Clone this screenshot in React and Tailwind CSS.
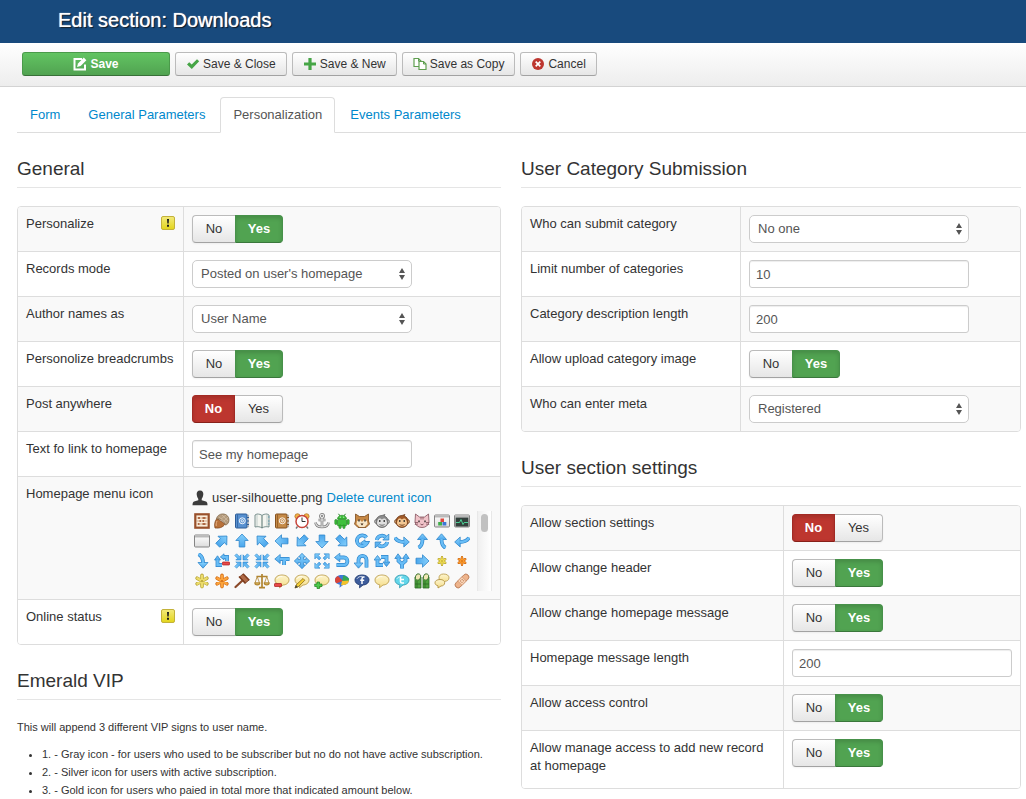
import React, { useState } from "react";

// ── Toolbar icons ─────────────────────────────────────────────
const toolbarIcons = {
  edit: (
    <>
      <path d="M9 2H1.500v10.500H12V7.500" fill="none" stroke="#fff" strokeWidth="2" />
      <path d="M4 10l1-3.600L10.800.6l2.600 2.600L7.600 9z" fill="#fff" />
    </>
  ),
  check: <path d="M1 7.400l2.200-2.200 2.500 2.300L11 2.200 13.200 4.300 5.800 11.900z" fill="#46a546" />,
  plus: <path d="M5.400 1h3.200v4.400H13v3.200H8.600V13H5.400V8.600H1V5.400h4.400z" fill="#46a546" />,
  copy: (
    <>
      <path d="M1 1.500h4.500l2.500 2.500v5.500H1z" fill="#fff" stroke="#5f9f50" strokeWidth="1.200" />
      <path d="M5.500 1.500V4H8" fill="none" stroke="#5f9f50" />
      <path d="M6 4.500h4.500L13 7v5.500H6z" fill="#fff" stroke="#5f9f50" strokeWidth="1.200" />
      <path d="M10.500 4.500V7H13" fill="none" stroke="#5f9f50" />
    </>
  ),
  cancel: (
    <>
      <circle cx="7" cy="7" r="6" fill="#bd362f" />
      <path d="M4.700 4.700l4.600 4.600M9.300 4.700L4.700 9.300" stroke="#fff" strokeWidth="1.700" />
    </>
  ),
};

function ToolbarIcon({ name }) {
  return (
    <svg viewBox="0 0 14 14" className="h-3.5 w-3.5 shrink-0" aria-hidden="true">
      {toolbarIcons[name]}
    </svg>
  );
}

// ── Small 16px icons for the homepage menu picker ─────────────
const blue = { fill: "url(#arrowFill)", stroke: "#2f86cc", strokeWidth: 0.8, strokeLinejoin: "round" };

function Arrow({ angle = 0 }) {
  return <path {...blue} transform={`rotate(${angle} 8 8)`} d="M8 1l6.200 6.500h-3.400V14H5.200V7.500H1.800z" />;
}

// thick bent line with a darker outline, plus its arrow heads
function Bend({ line, head }) {
  return (
    <>
      <path d={line} fill="none" stroke="#2f86cc" strokeWidth="3.800" />
      <path d={head} {...blue} />
      <path d={line} fill="none" stroke="#68bdf6" strokeWidth="2.400" />
    </>
  );
}

function Corners({ inward }) {
  return [0, 90, 180, 270].map((angle) => (
    <path
      key={angle}
      {...blue}
      strokeWidth={0.6}
      transform={`rotate(${angle} 8 8)`}
      d={inward ? "M7 7H1.800l1.700-1.700L.8 2.600 2.600.8l2.700 2.700L7 1.800z" : "M.8.8H6L4.300 2.500l2.600 2.600-1.800 1.800L2.500 4.300.8 6z"}
    />
  ));
}

function Asterisk({ color, dark, small }) {
  return (
    <g transform={small ? "translate(3.200 3.200) scale(.6)" : "translate(.8 .8) scale(.9)"}>
      <path d="M8 1.800v12.400M2.600 4.900l10.800 6.200M13.400 4.900L2.600 11.100" stroke={dark} strokeWidth="4" strokeLinecap="round" />
      <path d="M8 2v12M2.800 5l10.400 6M13.200 5L2.800 11" stroke={color} strokeWidth="2.600" strokeLinecap="round" />
      <circle cx="8" cy="8" r="1.200" fill={dark} />
    </g>
  );
}

function Balloon({ fill = "url(#balloonFill)", stroke = "#bda052", children }) {
  return (
    <>
      <path d="M8 2c4 0 7 2 7 5s-3 5-6 5l-3.500 2.800.3-3C3 11.300 1 9.700 1 7c0-3 3-5 7-5z" fill={fill} stroke={stroke} strokeWidth=".9" />
      <path d="M3 5.800C4 4 6 3.300 8.500 3.300" stroke="#fff" fill="none" opacity=".7" />
      {children}
    </>
  );
}

function AddressBook({ cover, dark }) {
  return (
    <>
      <path d="M12.500 2h2v12h-2z" fill="#eee" stroke="#999" strokeWidth=".6" />
      <path d="M13 4.500h2M13 8h2M13 11.500h2" stroke={dark} />
      <rect x="1.500" y="1" width="11.500" height="14" rx="1" fill={cover} stroke={dark} />
      <path d="M3.500 1.500v13" stroke={dark} strokeWidth=".7" />
      <circle cx="8.300" cy="7.800" r="3" fill="none" stroke="#fff" strokeWidth=".9" />
      <circle cx="8.300" cy="7.800" r="1.200" fill="none" stroke="#fff" strokeWidth=".9" />
    </>
  );
}

function Monkey({ fur, face, dark }) {
  return (
    <>
      <circle cx="2.500" cy="8.500" r="2" fill={face} stroke={dark} strokeWidth=".7" />
      <circle cx="13.500" cy="8.500" r="2" fill={face} stroke={dark} strokeWidth=".7" />
      <path d="M8 2.500l3-1-1 1.500c3 .8 4 3 4 5.500 0 3.500-2.500 6-6 6s-6-2.500-6-6C2 5 4.500 2.500 8 2.500z" fill={fur} stroke={dark} strokeWidth=".7" />
      <path d="M3.800 7c1-2.200 3.200-1.700 4.200-.4 1-1.300 3.200-1.800 4.200.4 1 1.800.8 3 .6 4-1 3.300-8.600 3.300-9.600 0-.2-1-.4-2.200.6-4z" fill={face} />
      <path d="M5.800 7v2M10.200 7v2" stroke="#222" strokeWidth="1.200" />
      <path d="M5.500 11.500c1.500 1 3.500 1 5 0" fill="none" stroke={dark} strokeWidth=".9" />
    </>
  );
}

function AppWindow({ children }) {
  return (
    <>
      <rect x=".5" y="2" width="15" height="12" rx="1" fill="url(#windowFill)" stroke="#858585" />
      <path d="M1 3.500h14" stroke="#b9b9b9" strokeWidth="2" />
      {children}
    </>
  );
}

const pickerIcons = [
  // row 1
  ["abacus", <>
    <rect x="1.300" y="1.300" width="13.400" height="13.400" fill="#fbeedd" stroke="#99502b" strokeWidth="2.200" />
    <path d="M2.500 5h11M2.500 8h11M2.500 11h11" stroke="#c08a64" strokeWidth=".7" />
    <path d="M4 5h2M8.500 5h3M5.500 8h1.500M8.500 8h1.500M4 11h1.500M8.500 11h3" stroke="#9c4a22" strokeWidth="1.700" />
  </>],
  ["acorn", <>
    <path d="M3 5.500C0 9 .5 13 1 15c4 .5 8-.5 10-4z" fill="#b8713a" stroke="#7a4118" strokeWidth=".7" />
    <path d="M3 8c-1 2-1 4-.7 5" stroke="#e5b184" fill="none" />
    <path d="M2.500 6C3 2 7 .5 10 1c3 .5 5 3 5 6 0 3-2 5-4 5-1-4-5-6.500-8.500-6z" fill="#b59c7e" stroke="#7d6446" strokeWidth=".7" />
    <path d="M5 4l7 6M8 2l6 6M7 6l5-4M10 8l4-4" stroke="#d6c3aa" strokeWidth=".6" />
  </>],
  ["address-book-blue", <AddressBook cover="#5790d0" dark="#2d5c98" />],
  ["address-book-open", <>
    <path d="M1 2l2-1c2 0 4 .5 5 1.500C9 1.500 11 1 13 1l2 1v12c-3-.7-5-.3-7 1-2-1.300-4-1.700-7-1z" fill="#f4f5f0" stroke="#6b8582" strokeWidth=".9" />
    <path d="M8 2.500V15" stroke="#54706c" />
    <path d="M3 1.500V13M13 1.500V13" stroke="#b4c3c1" strokeWidth=".8" />
    <path d="M14 4h1.500M14 8h1.500M14 11h1.500" stroke="#5a95a8" />
  </>],
  ["address-book-brown", <AddressBook cover="#c58a47" dark="#85511f" />],
  ["alarm-clock", <>
    <path d="M3.500 13.500L2 15.500M12.500 13.500l1.500 2" stroke="#777" strokeWidth="1.400" />
    <circle cx="3.500" cy="3.300" r="2.600" fill="#f0b348" stroke="#b06b1d" strokeWidth=".7" />
    <circle cx="12.500" cy="3.300" r="2.600" fill="#f0b348" stroke="#b06b1d" strokeWidth=".7" />
    <circle cx="8" cy="8.500" r="6" fill="#fff" stroke="#c8443a" strokeWidth="1.500" />
    <path d="M8 4.500v4h3.500" fill="none" stroke="#333" />
  </>],
  ["anchor", <>
    <g fill="none" stroke="#7a7a7a" strokeWidth="2.600">
      <circle cx="8" cy="3" r="1.600" /><path d="M8 4.500V14M4.500 7h7M1.500 9.500C2 13 5 14 8 14s6-1 6.500-4.500" />
    </g>
    <g fill="none" stroke="#e6e6e6" strokeWidth="1.100">
      <circle cx="8" cy="3" r="1.600" /><path d="M8 4.500V14M4.500 7h7M1.500 9.500C2 13 5 14 8 14s6-1 6.500-4.500" />
    </g>
  </>],
  ["android", <g fill="#3fc03c" stroke="#20821f" strokeWidth=".6">
    <path d="M4.500.8l1.400 2M11.500.8l-1.400 2" strokeWidth="1" />
    <path d="M3.500 6c0-5 9-5 9 0z" />
    <rect x="3.500" y="6.500" width="9" height="6.500" rx="1" />
    <rect x=".8" y="6.500" width="2.200" height="5" rx="1" />
    <rect x="13" y="6.500" width="2.200" height="5" rx="1" />
    <rect x="5" y="12" width="2.200" height="3.500" rx="1" />
    <rect x="8.800" y="12" width="2.200" height="3.500" rx="1" />
    <path d="M5.800 4.200h.9M9.300 4.200h.9" stroke="#fff" strokeWidth=".9" />
  </g>],
  ["dog", <>
    <path d="M1.500 1l4 2.500h5l4-2.500v7l1 3-3.500 3.500h-8L.5 11l1-3z" fill="#c68845" stroke="#7b4a1c" strokeWidth=".8" />
    <path d="M3 8l3-1 2 2 2-2 3 1 .5 3-3 3h-5l-3-3z" fill="#f7e6c8" />
    <path d="M5 6.500v2M11 6.500v2" stroke="#222" strokeWidth="1.300" />
    <path d="M6.500 10.500h3L8 12.500z" fill="#3b2412" />
  </>],
  ["monkey-gray", <Monkey fur="#8b8b8b" face="#dedede" dark="#5a5a5a" />],
  ["monkey", <Monkey fur="#a05a28" face="#f3c793" dark="#65310f" />],
  ["cat", <>
    <path d="M1.500 1l4 3h5l4-3 .5 8c-.5 3.500-3.500 5.500-7 5.500S1.500 12.500 1 9z" fill="#f0c3c9" stroke="#83525c" strokeWidth=".8" />
    <path d="M7 4v2.500M9 4v2.500M.8 9.500H4M.8 11.500L4 11M15.200 9.500H12M15.200 11.500L12 11" stroke="#83525c" strokeWidth=".8" />
    <path d="M5 7.500v1.800M11 7.500v1.800" stroke="#222" strokeWidth="1.300" />
    <path d="M6.500 11l1.500 1 1.500-1" fill="none" stroke="#83525c" />
  </>],
  ["application-block", <AppWindow>
    <rect x="6.500" y="5.500" width="3.500" height="3.500" fill="#e0473c" />
    <rect x="4.200" y="9" width="3.800" height="3.500" fill="#3fae48" />
    <rect x="8.500" y="9" width="3.800" height="3.500" fill="#3c77d6" />
  </AppWindow>],
  ["application-monitor", <AppWindow>
    <rect x="1.500" y="4.500" width="13" height="9" fill="#33403c" />
    <path d="M2 9.500h3.500L7 6.500l2 5 1.200-2H14" fill="none" stroke="#4fe0a0" strokeWidth=".9" />
  </AppWindow>],
  // row 2
  ["application", <AppWindow />],
  ["arrow-ne", <Arrow angle={45} />],
  ["arrow-n", <Arrow />],
  ["arrow-nw", <Arrow angle={-45} />],
  ["arrow-w", <Arrow angle={-90} />],
  ["arrow-sw", <Arrow angle={-135} />],
  ["arrow-s", <Arrow angle={180} />],
  ["arrow-se", <Arrow angle={135} />],
  ["arrow-circle", <Bend line="M12.500 4.500A5.300 5.300 0 1 0 13 10H9.500" head="M11 6.800L6.500 10l4.500 3.200z" />],
  ["arrow-circle-double", <Bend line="M2.800 7A5.300 5.300 0 0 1 11.500 4M13.200 9a5.300 5.300 0 0 1-8.700 3" head="M14.800 1v6H8.800zM1.200 15V9H7.200z" />],
  ["arrow-curve-right", <Bend line="M1 4.500C3 8.500 6 9 10.500 9" head="M9.800 4l5.500 5-5.500 5z" />],
  ["arrow-curve-up", <Bend line="M4.500 14.800C8 13 8.500 10 8.500 6" head="M3.500 6.500L8.500 .8l5 5.700z" />],
  ["arrow-curve-up-left", <Bend line="M11.500 14.800C8 13 7.500 10 7.500 6" head="M2.500 6.500L7.500 .8l5 5.700z" />],
  ["arrow-curve-left", <Bend line="M15 4.500C13 8.500 10 9 5.500 9" head="M6.200 4L.7 9l5.500 5z" />],
  // row 3
  ["arrow-curve-down", <Bend line="M4.500 1.200C8.500 3 9 6 9 10" head="M4 9.500L9 15.200l5-5.700z" />],
  ["arrow-repeat-minus", <>
    <Bend line="M8.500 4H13v4M8 12H3.500V6.500" head="M.5 7l3-4.200L6.500 7zM10 .8v6L6.300 4z" />
    <rect x="8.500" y="9" width="7" height="3" rx=".5" fill="#e84848" stroke="#a71c1c" strokeWidth=".7" />
  </>],
  ["arrow-in", <Corners inward />],
  ["arrow-in-out", <Corners inward />],
  ["arrow-merge", <Bend line="M15.500 6H6M12 6.500c-2 0-2 2-2 5.500" head="M6.200 1.500L.8 6l5.400 4.500z" />],
  ["arrow-move", <path {...blue} d="M8 .3l3.500 3.700H9.600v2.400H12V4.500L15.700 8 12 11.500V9.600H9.600V12h1.900L8 15.700 4.500 12h1.900V9.600H4v1.900L.3 8 4 4.500v1.900h2.400V4H4.500z" />],
  ["arrow-out", <Corners />],
  ["arrow-return", <Bend line="M5 4.500h5c4.500 0 4.500 7.500 0 7.500H2.500" head="M5.800.2v8.600L.5 4.500z" />],
  ["arrow-u-turn", <Bend line="M12.500 14.500V7c0-5.500-8-5.500-8 0v4" head="M0 10h9l-4.500 5.200z" />],
  ["arrow-repeat", <Bend line="M7 4h5.500v5M9 12H3.500V7" head="M9 9h7l-3.500 4.500zM0 7h7L3.500 2.500z" />],
  ["arrow-split", <Bend line="M8 15.500V11L4.500 8V5M8 11l3.500-3V5" head="M.8 5.500L4 .8l3.500 4.700zM8.500 5.500L12 .8l3.200 4.700z" />],
  ["arrow-e", <Arrow angle={90} />],
  ["asterisk-small-yellow", <Asterisk small color="#eedc55" dark="#ac9620" />],
  ["asterisk-small-orange", <Asterisk small color="#fb9a2c" dark="#c45c0b" />],
  // row 4
  ["asterisk-yellow", <Asterisk color="#ecdc6b" dark="#b6a335" />],
  ["asterisk-orange", <Asterisk color="#fba33c" dark="#d26c15" />],
  ["auction-hammer", <>
    <path d="M8.500 7.500L1.500 14" stroke="#8b4a2a" strokeWidth="2.200" strokeLinecap="round" />
    <path d="M5.500 4L9 1l6 6-3.500 3z" fill="#b06a47" stroke="#6d351b" strokeWidth=".8" />
    <path d="M5 3.500l6.500 7M9 .8l6.300 6.500" stroke="#7e3c1d" strokeWidth="1.600" />
  </>],
  ["balance", <g fill="none" stroke="#b08430" strokeWidth="1.100">
    <path d="M8 1v13M2.500 3.500h11M5 14.700h6" strokeWidth="1.700" />
    <path d="M3.200 3.500L1 10h4.500zM12.800 3.500L10.500 10H15z" strokeWidth=".8" />
    <path d="M.8 10h5c0 2.500-5 2.500-5 0zM10.200 10h5c0 2.500-5 2.500-5 0z" fill="#eccc6d" />
  </g>],
  ["balloon-minus", <Balloon><rect x=".5" y="10.500" width="7" height="3" rx=".5" fill="#e84848" stroke="#a71c1c" strokeWidth=".7" /></Balloon>],
  ["balloon-pencil", <Balloon><path d="M1 15l1-3L9 5.500l1.800 1.800L4 14z" fill="#f4cf36" stroke="#8d6c13" strokeWidth=".8" /><path d="M.7 15.300L2 12l2 2z" fill="#444" /></Balloon>],
  ["balloon-plus", <Balloon><path d="M3 9h2.500v2H8v2.500H5.500v2H3v-2H.7V11H3z" fill="#4cc94c" stroke="#1c7f20" strokeWidth=".7" /></Balloon>],
  ["balloon-buzz", <>
    <path d="M8 2C4 2 1 4 1 7c0 2.500 1.500 4 4.800 4.800l-.3 3L9 12c3 0 6-2 6-5s-3-5-7-5z" fill="#3d79d8" />
    <path d="M9.500 2L15 5.500V8L8 8z" fill="#34a853" />
    <path d="M4 3C2 4 1 5.500 1 7c0 1.500.5 2.500 1.500 3.300L9 8z" fill="#dc4437" />
    <path d="M15 7.500L8 8l-1 4.500 2-.5c3 0 6-2 6-4.500z" fill="#f4c22b" />
  </>],
  ["balloon-facebook", <Balloon fill="#3e5d9c" stroke="#253e74">
    <path d="M10.500 4H9.700C8.500 4 8 4.700 8 5.700V11M6.200 7.300h4" fill="none" stroke="#fff" strokeWidth="1.500" />
  </Balloon>],
  ["balloon", <Balloon />],
  ["balloon-twitter", <Balloon fill="#62d6ea" stroke="#3a9fb4">
    <path d="M6.500 4v4.500c0 1 .5 1.500 1.500 1.500h2M6.500 6.500H10" fill="none" stroke="#fff" strokeWidth="1.600" />
  </Balloon>],
  ["bamboos", <g fill="#4fa23f" stroke="#2c6b24" strokeWidth=".8">
    <path d="M1 4v11h6V4zM9 4v11h6V4z" />
    <ellipse cx="4" cy="4" rx="2.600" ry="3.300" fill="#f0e6b4" transform="rotate(20 4 4)" />
    <ellipse cx="12" cy="4" rx="2.600" ry="3.300" fill="#f0e6b4" transform="rotate(20 12 4)" />
    <path d="M1 11h6M9 11h6M3 8v7M11 8v7" />
  </g>],
  ["balloons", <>
    <path d="M9.500 1C13 1 15 2.500 15 4.800S13 8.300 11 8.300L8.500 10V8C6 7.500 5 6.500 5 4.800 5 2.500 6.500 1 9.500 1z" fill="url(#balloonFill)" stroke="#bda052" strokeWidth=".9" />
    <path d="M6 6.500c3 0 4.700 1.300 4.700 3.300S9 13 7 13l-3 2v-2.200c-2-.5-3-1.500-3-3 0-2 2-3.300 5-3.300z" fill="url(#balloonFill)" stroke="#b39443" strokeWidth=".9" />
  </>],
  ["band-aid", <g transform="rotate(-45 8 8)">
    <rect x="-.5" y="5" width="17" height="6" rx="3" fill="#eeb48c" stroke="#b5734b" strokeWidth=".8" />
    <rect x="5" y="5" width="6" height="6" fill="#f8d3b6" stroke="#c98d67" strokeWidth=".6" />
    <path d="M6.500 7h1M8.700 7h1M6.500 9h1M8.700 9h1" stroke="#b5734b" />
  </g>],
];

function IconPicker() {
  return (
    <div className="flex h-20 w-[300px] max-w-full justify-between overflow-hidden">
      <div className="grid w-[280px] grid-cols-[repeat(14,20px)] content-start">
        {pickerIcons.map(([name, art]) => (
          <button key={name} type="button" aria-label={name} className="flex h-5 w-5 items-center justify-center">
            <svg viewBox="0 0 16 16" className="h-4 w-4">
              {art}
            </svg>
          </button>
        ))}
      </div>
      <div className="h-20 w-[15px] border-x border-[#e8e8e8] bg-linear-to-r from-[#f0f0f0] to-white px-[3px] pt-[3px]">
        <div className="h-[18px] rounded-full bg-[#c1c1c1]" />
      </div>
    </div>
  );
}

// ── Form controls ─────────────────────────────────────────────
function Toggle({ id, initial }) {
  const [value, setValue] = useState(initial);
  const base = "relative flex h-7 cursor-pointer items-center justify-center border text-[13px] leading-[18px]";
  const idle =
    "border-[#bbb] border-b-[#a2a2a2] bg-linear-to-b from-white to-[#e6e6e6] text-[#333] shadow-[0_1px_2px_rgba(0,0,0,0.05)]";
  const yes = "border-[#47914a] border-b-[#3a773c] bg-[#51a351] font-bold text-white shadow-[inset_0_2px_4px_rgba(0,0,0,0.15)]";
  const no = "border-[#a32a24] border-b-[#872019] bg-[#bd362f] font-bold text-white shadow-[inset_0_2px_4px_rgba(0,0,0,0.15)]";

  return (
    <div role="radiogroup" aria-labelledby={`${id}-label`} className="flex">
      <label className={`${base} w-[43px] rounded-l ${value === "No" ? no : `${idle} border-r-0`}`}>
        <input type="radio" name={id} className="sr-only" checked={value === "No"} onChange={() => setValue("No")} />
        No
      </label>
      <label className={`${base} w-12 rounded-r ${value === "Yes" ? yes : `${idle} border-l-0`}`}>
        <input type="radio" name={id} className="sr-only" checked={value === "Yes"} onChange={() => setValue("Yes")} />
        Yes
      </label>
    </div>
  );
}

function TextInput({ id, initial }) {
  return (
    <input
      id={id}
      type="text"
      defaultValue={initial}
      className="block h-7 w-[220px] max-w-full rounded-[3px] border border-[#ccc] bg-white px-1.5 text-[13px] leading-[18px] text-[#555] shadow-[inset_0_1px_1px_rgba(0,0,0,0.075)]"
    />
  );
}

function SelectBox({ id, initial }) {
  return (
    <div className="relative w-[220px] max-w-full">
      <select
        id={id}
        defaultValue={initial}
        className="block h-7 w-full appearance-none rounded-[5px] border border-[#ccc] bg-white px-2 text-[13px] leading-[18px] text-[#555]"
      >
        <option>{initial}</option>
      </select>
      <svg viewBox="0 0 6 12" className="pointer-events-none absolute top-2 right-[7px] h-3 w-1.5" aria-hidden="true">
        <path d="M3 0l3 5H0zM0 7h6l-3 5z" fill="#555" />
      </svg>
    </div>
  );
}

function WarningIcon() {
  return (
    <svg viewBox="0 0 14 14" className="h-3.5 w-3.5 shrink-0" role="img" aria-label="Note">
      <rect x=".5" y=".5" width="13" height="13" rx="1.500" fill="url(#warnFill)" stroke="#c3b23a" />
      <path d="M6 3h2l-.3 4.500H6.300zM6 8.700h2v2H6z" fill="#1c1c1c" />
    </svg>
  );
}

function HomepageIcon() {
  return (
    <>
      <div className="flex h-[26px] items-center gap-1">
        <svg viewBox="0 0 16 16" className="h-4 w-4" aria-hidden="true">
          <path d="M8 .5c2.500 0 3.500 1.700 3.300 4C11 7 10 8.300 9.700 9v1.200l4.300 1.300c1 .4 1.500 1.500 1.500 3.800H.5c0-2.300.5-3.400 1.500-3.800l4.300-1.300V9C6 8.300 5 7 4.700 4.500 4.500 2.200 5.500.5 8 .5z" fill="#3c3c3c" />
        </svg>
        <span>user-silhouette.png</span>
        <a href="#delete" className="text-[#0088cc]">
          Delete curent icon
        </a>
      </div>
      <IconPicker />
    </>
  );
}

function Control({ field }) {
  if (field.type === "toggle") return <Toggle id={field.id} initial={field.value} />;
  if (field.type === "select") return <SelectBox id={field.id} initial={field.value} />;
  if (field.type === "text") return <TextInput id={field.id} initial={field.value} />;
  return <HomepageIcon />;
}

function Section({ title, children }) {
  return (
    <section className="mb-[18px]">
      <h2 className="mb-[18px] border-b border-[#e5e5e5] text-[19px] leading-[36px] text-[#333]">{title}</h2>
      {children}
    </section>
  );
}

function FieldTable({ fields, labelWidth }) {
  return (
    <table className="w-full table-fixed border-separate border-spacing-0 overflow-hidden rounded border border-[#ddd]">
      <tbody>
        {fields.map((field, i) => {
          const line = i > 0 ? "border-t border-t-[#ddd]" : "";
          const stripe = i % 2 === 0 ? "bg-[#f9f9f9]" : "bg-white";
          const isInput = field.type === "text" || field.type === "select";
          return (
            <tr key={field.id}>
              <th scope="row" className={`${labelWidth} ${line} ${stripe} p-2 text-left align-top font-normal`}>
                <div className={`flex items-start justify-between ${field.tall ? "pb-[5px]" : ""}`}>
                  {isInput ? (
                    <label htmlFor={field.id}>{field.label}</label>
                  ) : (
                    <span id={`${field.id}-label`}>{field.label}</span>
                  )}
                  {field.warn && (
                    <span className="pt-px">
                      <WarningIcon />
                    </span>
                  )}
                </div>
              </th>
              <td className={`border-l border-l-[#ddd] ${line} ${stripe} p-2 align-top`}>
                <Control field={field} />
              </td>
            </tr>
          );
        })}
      </tbody>
    </table>
  );
}

// ── Data ──────────────────────────────────────────────────────
const general = [
  { id: "personalize", label: "Personalize", type: "toggle", value: "Yes", warn: true },
  { id: "records-mode", label: "Records mode", type: "select", value: "Posted on user's homepage" },
  { id: "author-names", label: "Author names as", type: "select", value: "User Name" },
  { id: "breadcrumbs", label: "Personolize breadcrumbs", type: "toggle", value: "Yes" },
  { id: "post-anywhere", label: "Post anywhere", type: "toggle", value: "No" },
  { id: "home-text", label: "Text fo link to homepage", type: "text", value: "See my homepage" },
  { id: "home-icon", label: "Homepage menu icon", type: "icon" },
  { id: "online-status", label: "Online status", type: "toggle", value: "Yes", warn: true },
];

const categorySubmission = [
  { id: "who-submit", label: "Who can submit category", type: "select", value: "No one" },
  { id: "limit-categories", label: "Limit number of categories", type: "text", value: "10" },
  { id: "description-length", label: "Category description length", type: "text", value: "200" },
  { id: "upload-image", label: "Allow upload category image", type: "toggle", value: "Yes" },
  { id: "who-meta", label: "Who can enter meta", type: "select", value: "Registered" },
];

const sectionSettings = [
  { id: "section-settings", label: "Allow section settings", type: "toggle", value: "No" },
  { id: "change-header", label: "Allow change header", type: "toggle", value: "Yes" },
  { id: "change-message", label: "Allow change homepage message", type: "toggle", value: "Yes" },
  { id: "message-length", label: "Homepage message length", type: "text", value: "200" },
  { id: "access-control", label: "Allow access control", type: "toggle", value: "Yes" },
  { id: "manage-access", label: "Allow manage access to add new record at homepage", type: "toggle", value: "Yes", tall: true },
];

const actions = [
  { label: "Save & Close", icon: "check" },
  { label: "Save & New", icon: "plus" },
  { label: "Save as Copy", icon: "copy" },
  { label: "Cancel", icon: "cancel" },
];

const tabs = ["Form", "General Parameters", "Personalization", "Events Parameters"];

export default function App() {
  const [active, setActive] = useState("Personalization");

  return (
    <div className="bg-white font-['Helvetica_Neue','Liberation_Sans',Arial,sans-serif] text-[13px] leading-[18px] text-[#333]">
      {/* shared gradients; the svg has to stay rendered for them to apply */}
      <svg className="absolute h-0 w-0" aria-hidden="true">
        <defs>
          <linearGradient id="arrowFill" x1="0" y1="0" x2="0" y2="1">
            <stop offset="0" stopColor="#86d0fc" />
            <stop offset="1" stopColor="#4aa6ec" />
          </linearGradient>
          <linearGradient id="warnFill" x1="0" y1="0" x2="0" y2="1">
            <stop offset="0" stopColor="#f3ea7c" />
            <stop offset="1" stopColor="#e3d51b" />
          </linearGradient>
          <linearGradient id="balloonFill" x1="0" y1="0" x2="0" y2="1">
            <stop offset="0" stopColor="#fdf5cf" />
            <stop offset="1" stopColor="#f5dc86" />
          </linearGradient>
          <linearGradient id="windowFill" x1="0" y1="0" x2="0" y2="1">
            <stop offset="0" stopColor="#ffffff" />
            <stop offset="1" stopColor="#dcdcdc" />
          </linearGradient>
        </defs>
      </svg>

      <header className="flex h-[43px] items-center bg-[#184a7d] pb-1 pl-[58px]">
        <h1 className="text-xl text-white [text-shadow:0_0_1px_#fff,1px_1px_1px_rgba(0,0,0,0.9)]">Edit section: Downloads</h1>
      </header>

      <div className="flex h-11 items-start gap-[5px] border-b border-[#d3d3d3] bg-linear-to-b from-white to-[#ededed] pt-[9px] pl-[22px] text-xs leading-[22px]">
        <button
          type="button"
          className="flex h-6 w-[148px] items-center justify-center gap-[3px] rounded-[3px] border border-[#4a9a4a] border-b-[#387038] bg-linear-to-b from-[#62c462] to-[#51a351] font-bold text-white"
        >
          <ToolbarIcon name="edit" />
          Save
        </button>
        {actions.map((action) => (
          <button
            key={action.label}
            type="button"
            className="flex h-6 items-center gap-[3px] rounded-[3px] border border-[#bbb] border-b-[#a2a2a2] bg-linear-to-b from-white to-[#e6e6e6] px-2.5 whitespace-nowrap"
          >
            <ToolbarIcon name={action.icon} />
            {action.label}
          </button>
        ))}
      </div>

      <nav className="mt-2.5 ml-[17px] flex gap-0.5 border-b border-[#ddd]">
        {tabs.map((tab) => (
          <a
            key={tab}
            href="#tab"
            onClick={() => setActive(tab)}
            className={`-mb-px rounded-t border px-3 py-2 ${
              tab === active ? "border-[#ddd] border-b-white bg-white text-[#555]" : "border-transparent text-[#0088cc]"
            }`}
          >
            {tab}
          </a>
        ))}
      </nav>

      <main className="grid grid-cols-[484fr_500fr] gap-5 pt-[18px] pr-[5px] pl-[17px]">
        <div>
          <Section title="General">
            <FieldTable fields={general} labelWidth="w-[165px]" />
          </Section>
          <Section title="Emerald VIP">
            <p className="mb-[9px] text-[11px]">This will append 3 different VIP signs to user name.</p>
            <ul className="ml-[25px] list-disc text-[11px]">
              <li>1. - Gray icon - for users who used to be subscriber but no do not have active subscription.</li>
              <li>2. - Silver icon for users with active subscription.</li>
              <li>3. - Gold icon for users who paied in total more that indicated amount below.</li>
            </ul>
          </Section>
        </div>
        <div>
          <Section title="User Category Submission">
            <FieldTable fields={categorySubmission} labelWidth="w-[218px]" />
          </Section>
          <Section title="User section settings">
            <FieldTable fields={sectionSettings} labelWidth="w-[261px]" />
          </Section>
        </div>
      </main>
    </div>
  );
}
